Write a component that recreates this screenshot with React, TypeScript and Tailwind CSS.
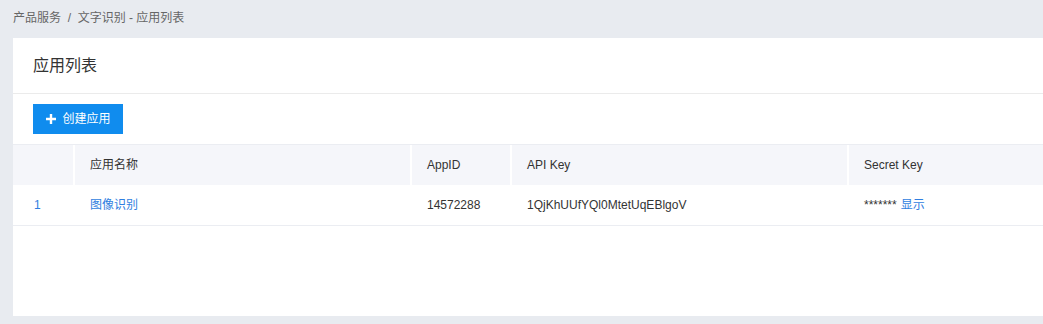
import React from "react";

export default function App() {
  const font = { fontFamily: '"Liberation Sans", Arial, "Noto Sans CJK SC", sans-serif' };
  return (
    <div className="w-[1043px] h-[324px] bg-[#e8ebf0] overflow-hidden" style={font}>
      <div className="h-[38px] pl-[13px] flex items-center text-[12px] text-[#666] pb-[2px]">
        产品服务&nbsp;&nbsp;/&nbsp;&nbsp;文字识别 - 应用列表
      </div>
      <div className="ml-[13px] bg-white h-[278px] flex flex-col">
        <div className="h-[56px] border-b border-[#ebebeb] flex items-center pl-[20px] text-[16px] text-[#333]">
          应用列表
        </div>
        <div className="pt-[10px] pb-[10px] pl-[20px]">
          <button className="w-[90px] h-[30px] bg-[#108cee] text-white text-[12px] flex items-center justify-center gap-[5px]">
            <svg width="12" height="12" viewBox="0 0 12 12">
              <path d="M6 1v10M1 6h10" stroke="white" strokeWidth="2.4" />
            </svg>
            创建应用
          </button>
        </div>
        <div className="border-t border-[#ebedf2]">
          <div className="flex h-[40px] bg-[#f5f6fa] text-[12px] text-[#333]">
            <div className="w-[62px] border-r-2 border-white" />
            <div className="w-[337px] border-r-2 border-white flex items-center pl-[15px]">应用名称</div>
            <div className="w-[100px] border-r-2 border-white flex items-center pl-[15px]">AppID</div>
            <div className="w-[337px] border-r-2 border-white flex items-center pl-[15px]">API Key</div>
            <div className="flex-1 flex items-center pl-[15px]">Secret Key</div>
          </div>
          <div className="flex h-[41px] border-b border-[#ebedf2] text-[12px] text-[#333]">
            <div className="w-[62px] flex items-center pl-[21px] text-[#2f7ee0]">1</div>
            <div className="w-[337px] flex items-center pl-[15px] text-[#2f7ee0]">图像识别</div>
            <div className="w-[100px] flex items-center pl-[15px]">14572288</div>
            <div className="w-[337px] flex items-center pl-[15px]">1QjKhUUfYQl0MtetUqEBlgoV</div>
            <div className="flex-1 flex items-center pl-[15px]">
              ******* <span className="ml-[4px] text-[#2f7ee0]">显示</span>
            </div>
          </div>
        </div>
      </div>
    </div>
  );
}
